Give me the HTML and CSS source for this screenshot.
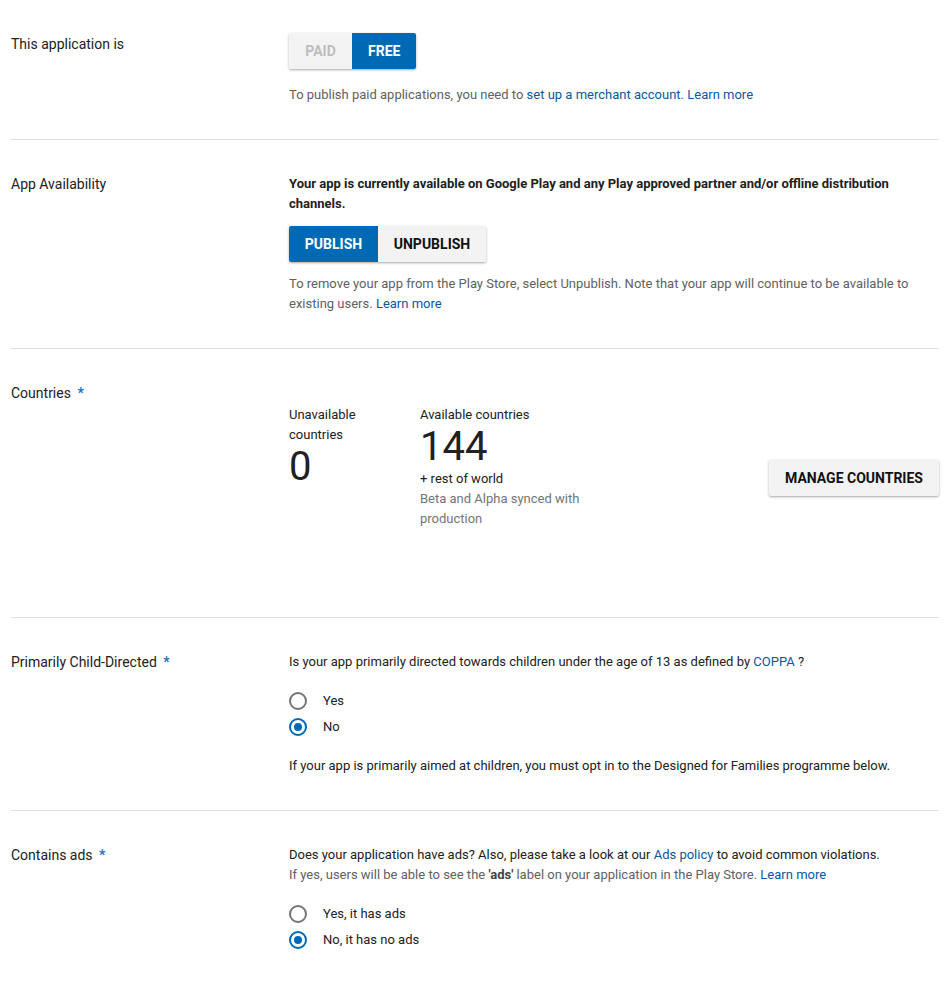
FILE: index.html
```html
<!DOCTYPE html>
<html lang="en">
<head>
<meta charset="utf-8">
<title>Pricing &amp; distribution</title>
<link rel="stylesheet" href="styles.css">
</head>
<body>
<main class="page">
  <section class="row">
    <div class="label">This application is</div>
    <div class="content">
      <div class="toggle toggle-price">
        <span class="seg seg-off">PAID</span>
        <span class="seg seg-on">FREE</span>
      </div>
      <p class="help help-after-btn">To publish paid applications, you need to <a href="#">set up a merchant account</a>. <a href="#">Learn more</a></p>
    </div>
  </section>

  <section class="row">
    <div class="label">App Availability</div>
    <div class="content">
      <p class="strong">Your app is currently available on Google Play and any Play approved partner and/or offline distribution channels.</p>
      <div class="toggle toggle-publish">
        <span class="seg seg-on">PUBLISH</span>
        <span class="seg seg-dark">UNPUBLISH</span>
      </div>
      <p class="help help-after-pub">To remove your app from the Play Store, select Unpublish. Note that your app will continue to be available to existing users. <a href="#">Learn more</a></p>
    </div>
  </section>

  <section class="row row-countries">
    <div class="label">Countries <span class="req">*</span></div>
    <div class="content">
      <div class="countries">
        <div class="stat stat-unavail">
          <div class="stat-title">Unavailable countries</div>
          <div class="stat-num">0</div>
        </div>
        <div class="stat stat-avail">
          <div class="stat-title">Available countries</div>
          <div class="stat-num">144</div>
          <div class="stat-sub">+ rest of world</div>
          <div class="stat-note">Beta and Alpha synced with production</div>
        </div>
        <button class="btn-raised" type="button">MANAGE COUNTRIES</button>
      </div>
    </div>
  </section>

  <section class="row">
    <div class="label">Primarily Child-Directed <span class="req">*</span></div>
    <div class="content">
      <p class="text">Is your app primarily directed towards children under the age of 13 as defined by <a href="#">COPPA</a> ?</p>
      <div class="radios">
        <label class="radio"><span class="dot"></span><span>Yes</span></label>
        <label class="radio"><span class="dot dot-on"></span><span>No</span></label>
      </div>
      <p class="text">If your app is primarily aimed at children, you must opt in to the Designed for Families programme below.</p>
    </div>
  </section>

  <section class="row row-last">
    <div class="label">Contains ads <span class="req">*</span></div>
    <div class="content">
      <p class="text">Does your application have ads? Also, please take a look at our <a href="#">Ads policy</a> to avoid common violations.</p>
      <p class="help">If yes, users will be able to see the <b class="ads">'ads'</b> label on your application in the Play Store. <a href="#">Learn more</a></p>
      <div class="radios">
        <label class="radio"><span class="dot"></span><span>Yes, it has ads</span></label>
        <label class="radio"><span class="dot dot-on"></span><span>No, it has no ads</span></label>
      </div>
    </div>
  </section>
</main>
</body>
</html>
```

FILE: styles.css
```css
* { box-sizing: border-box; }

html, body {
  margin: 0;
  padding: 0;
  background: #ffffff;
}

body {
  font-family: Roboto, "Liberation Sans", Arial, sans-serif;
  font-size: 13px;
  line-height: 20px;
  color: #212121;
}

.page {
  padding: 0 12px 0 11px;
}

p { margin: 0; }

a {
  color: #0b57a0;
  text-decoration: none;
}

.row {
  display: grid;
  grid-template-columns: 278px 1fr;
  padding: 34px 0 34px;
  border-bottom: 1px solid #e0e0e0;
}

.row-last {
  border-bottom: none;
}

.label {
  font-size: 14px;
  color: #212121;
}

.req {
  color: #1a73c8;
  font-weight: 700;
  margin-left: 3px;
}

.content {
  min-width: 0;
}

.help {
  color: #616161;
}

.help-after-btn { margin-top: 16px; }
.help-after-pub { margin-top: 12px; }

.strong {
  font-weight: 700;
}

.toggle {
  display: inline-flex;
  height: 36px;
  border-radius: 2px;
  overflow: hidden;
  box-shadow: 0 1px 3px rgba(0, 0, 0, 0.28), 0 1px 1px rgba(0, 0, 0, 0.08);
  vertical-align: top;
}

.toggle-price { margin-top: -1px; }
.toggle-publish { margin-top: 12px; }

.seg {
  display: flex;
  align-items: center;
  justify-content: center;
  padding: 0 16px;
  font-size: 14px;
  font-weight: 700;
}

.seg-off {
  background: #f3f3f3;
  color: #bdbdbd;
  width: 63px;
}

.seg-on {
  background: #0069b4;
  color: #ffffff;
  min-width: 64px;
}

.seg-dark {
  background: #f3f3f3;
  color: #111111;
}

.toggle-publish .seg-on { width: 89px; }
.toggle-publish .seg-dark { width: 108px; }

/* Countries */
.countries {
  display: flex;
  align-items: flex-start;
  padding-top: 22px;
  min-height: 200px;
}

.stat-unavail {
  width: 100px;
  margin-right: 31px;
}

.stat-avail {
  width: 172px;
}

.stat-title { color: #212121; }

.stat-num {
  font-size: 40px;
  line-height: 44px;
  color: #212121;
  font-weight: 400;
}

.stat-sub { color: #212121; }

.stat-note { color: #757575; }

.btn-raised {
  margin-left: auto;
  margin-top: 55px;
  height: 36px;
  width: 170px;
  padding: 0 16px;
  border: none;
  border-radius: 2px;
  background: #f3f3f3;
  color: #111111;
  font-family: Roboto, "Liberation Sans", Arial, sans-serif;
  font-size: 14px;
  font-weight: 700;
  box-shadow: 0 1px 3px rgba(0, 0, 0, 0.28), 0 1px 1px rgba(0, 0, 0, 0.08);
}

/* Radios */
.radios {
  margin: 16px 0;
}

.radio {
  display: flex;
  align-items: center;
  height: 26px;
}

.dot {
  width: 18px;
  height: 18px;
  border-radius: 50%;
  border: 2px solid #757575;
  margin-right: 16px;
  position: relative;
  flex: none;
}

.dot-on {
  border-color: #0069b4;
}

.dot-on::after {
  content: "";
  position: absolute;
  left: 3px;
  top: 3px;
  width: 8px;
  height: 8px;
  border-radius: 50%;
  background: #0069b4;
}

.row-last .radios { margin-bottom: 0; }

.ads {
  color: #424242;
  font-weight: 700;
}
```
